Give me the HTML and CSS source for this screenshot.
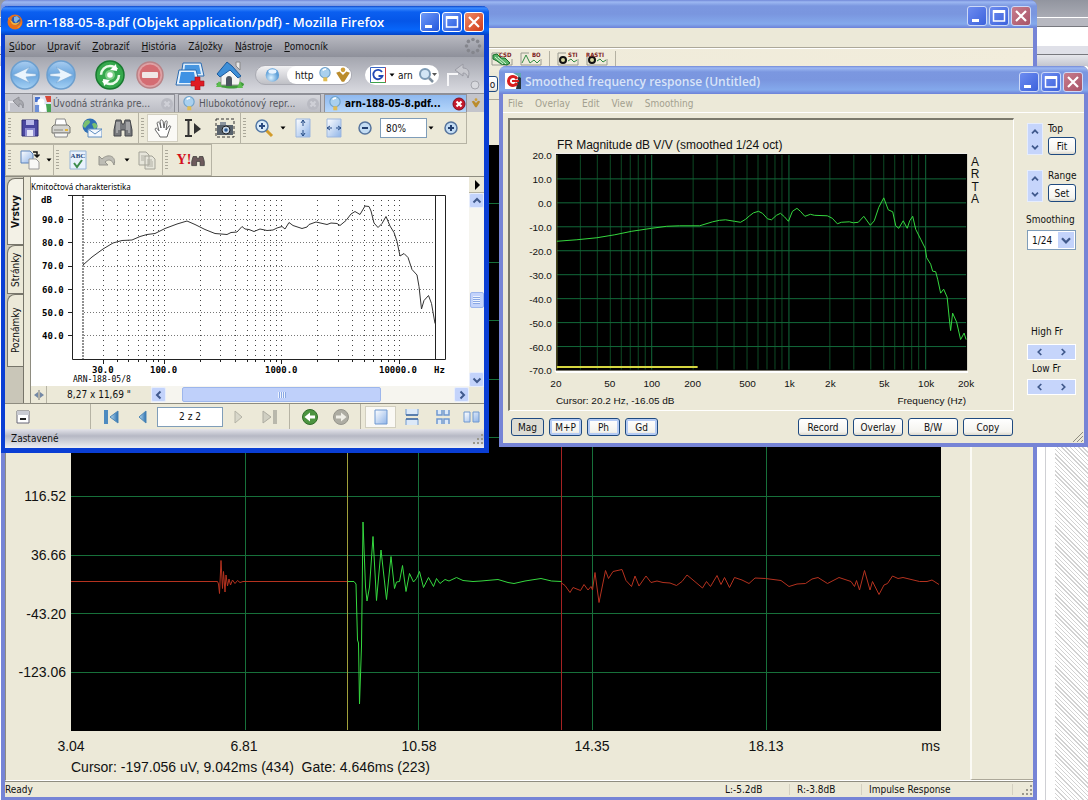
FILE: index.html
```html
<!DOCTYPE html>
<html lang="sk">
<head>
  <meta charset="UTF-8">
  <title>arn-188-05-8.pdf</title>
  <link rel="stylesheet" href="styles.css">
</head>
<body>
  <!-- Shared icon shapes -->
  <svg class="defs" aria-hidden="true">
    <defs>
      <linearGradient id="gBlue" x1="0" y1="0" x2="0" y2="1"><stop offset="0" stop-color="#a9cdf0"/><stop offset=".5" stop-color="#6ba6de"/><stop offset="1" stop-color="#a6d2f5"/></linearGradient>
      <linearGradient id="gPage" x1="0" y1="0" x2="1" y2="1"><stop offset="0" stop-color="#fff"/><stop offset="1" stop-color="#8fb4e8"/></linearGradient>
      <linearGradient id="gArrow" x1="0" y1="0" x2="1" y2="0"><stop offset="0" stop-color="#bfe0f5"/><stop offset="1" stop-color="#2a6fae"/></linearGradient>
      <radialGradient id="gBall" cx=".4" cy=".7"><stop offset="0" stop-color="#dff3ff"/><stop offset="1" stop-color="#5fa0d8"/></radialGradient>
    </defs>
    <symbol id="min" viewBox="0 0 20 20"><path d="M5 13h7v3H5z" fill="#fff"/></symbol>
    <symbol id="max" viewBox="0 0 20 20"><path d="M4.500 5h11v10h-11z" fill="none" stroke="#fff" stroke-width="1.500"/><path d="M4 4h12v3H4z" fill="#fff"/></symbol>
    <symbol id="close" viewBox="0 0 20 20"><path d="M5 5l10 10m0-10L5 15" stroke="#fff" stroke-width="2.200"/></symbol>
    <symbol id="chevU" viewBox="0 0 14 14"><path d="M3.500 8.500L7 5l3.500 3.500" fill="none" stroke="#40598c" stroke-width="2"/></symbol>
    <symbol id="chevD" viewBox="0 0 14 14"><path d="M3.500 5.500L7 9l3.500-3.500" fill="none" stroke="#40598c" stroke-width="2"/></symbol>
    <symbol id="chevL" viewBox="0 0 14 14"><path d="M8.500 3.500L5 7l3.500 3.500" fill="none" stroke="#40598c" stroke-width="2"/></symbol>
    <symbol id="chevR" viewBox="0 0 14 14"><path d="M5.500 3.500L9 7l-3.500 3.500" fill="none" stroke="#40598c" stroke-width="2"/></symbol>
    <symbol id="drop" viewBox="0 0 8 8"><path d="M1.500 2.500h5L4 5.500z" fill="#000"/></symbol>
    <symbol id="bulb" viewBox="0 0 14 14"><circle cx="7" cy="5" r="4.500" fill="#a9d0ee" stroke="#6ea2cc"/><path d="M5 3a3 3 0 0 1 3-1" stroke="#fff" stroke-width="1.500" fill="none"/><path d="M5.500 9h3.500v3.500H5.500z" fill="#e0bd55"/></symbol>
    <symbol id="check" viewBox="0 0 14 14"><path d="M1 5l3-1 3 3 3-3 3 1-5 8H6z" fill="#bb8c2c"/><circle cx="7" cy="2.500" r="2" fill="#cf9f3a"/></symbol>
    <symbol id="grip" viewBox="0 0 12 12"><path d="M9 1h2v2H9zM9 5h2v2H9zM5 5h2v2H5zM9 9h2v2H9zM5 9h2v2H5zM1 9h2v2H1z" fill="#9a988d"/></symbol>
  </svg>

  <main class="desktop">
    <div class="backdrop">
      <div class="back-bar"></div>
      <div class="back-strip"></div>
      <div class="back-white"></div>
      <div class="back-strip light"></div>
      <div class="back-page"></div>
    </div>

    <!-- Impulse response window -->
    <section class="window main-win" aria-label="Impulse Response">
      <header class="titlebar">
        <span class="title"></span>
        <div class="controls">
          <button aria-label="Minimize"><svg><use href="#min"/></svg></button>
          <button aria-label="Maximize"><svg><use href="#max"/></svg></button>
          <button class="close" aria-label="Close"><svg><use href="#close"/></svg></button>
        </div>
      </header>
      <div class="main-menu"></div>
      <div class="main-tools">
        <button aria-label="CSD"><svg viewBox="0 0 22 16"><path d="M1 2v12h20V8M1 2h8" fill="none" stroke="#999a90"/><path d="M2 4l4-1 4 4 4 0 5 5-3 2-6-1-4-3-4-2z" fill="#5bb56a" stroke="#136b26"/><path d="M4 6l8 7M7 6l8 7" stroke="#d9f2d9"/><text x="8" y="6">CSD</text></svg></button>
        <button aria-label="BO"><svg viewBox="0 0 22 16"><path d="M1 2v12h20V8M1 2h8" fill="none" stroke="#999a90"/><path d="M2 12L6 4l4 8 4-3 3 3 3-3" fill="none" stroke="#328a43"/><text x="12" y="6">BO</text></svg></button>
        <i class="sep"></i>
        <button aria-label="STI"><svg viewBox="0 0 22 16"><path d="M1 2v12h20V8M1 2h8" fill="none" stroke="#999a90"/><circle cx="6" cy="9" r="3" fill="#d7d7a0" stroke="#111" stroke-width="2"/><path d="M11 10l3-2 3 3 3-2" fill="none" stroke="#328a43"/><text x="11" y="6">STI</text></svg></button>
        <button aria-label="RASTI"><svg viewBox="0 0 22 16"><path d="M1 6v8h20V8" fill="none" stroke="#999a90"/><circle cx="6" cy="9" r="3" fill="#d7d7a0" stroke="#111" stroke-width="2"/><path d="M11 10l3-2 3 3 3-2" fill="none" stroke="#328a43"/><text x="0" y="6">RASTI</text></svg></button>
        <i class="sep"></i>
      </div>
      <div class="main-tools second"><button class="btn">o</button></div>
      <div class="main-body">
        <svg class="impulse" viewBox="6 100 964 679" role="img" aria-label="Impulse response plot">
          <rect x="71" y="145" width="870" height="586"/>
          <path class="grid-line" d="M245.500 145v585M418.500 145v585M592.500 145v585M766.500 145v585M71 203.500h869M71 262.500h869M71 320.500h869M71 379.500h869M71 437.500h869M71 496.500h869M71 555.500h869M71 613.500h869M71 672.500h869"/>
          <path d="M347.500 145v585" stroke="#a0a03a" fill="none"/>
          <path d="M561.500 145v585" stroke="#a52222" fill="none"/>
          <polyline class="red" points="71,581.5 217.500,581.5 218.500,584 219.500,593.5 221,560.5 222.500,588.500 223.500,571.5 225,592 226,575 227.500,586 229,579 230.500,585 232.500,580 235,583.5 237.500,580.5 240,582.5 243,581.5 347,581.5"/>
          <polyline class="green" points="348,581.5 354,581.5 356,584 357.500,640 358.500,643 359.500,704 361.500,646 363,522 365.500,587 367,601 369.500,587 373,536.500 376.500,600.500 381,550 386.500,599.500 391,556.500 394.500,588.500 396.500,582 399.500,581.5 402.500,565.500 406,591.500 409.500,573.5 413.500,582 416.500,578.500 419.500,571.5 423.500,587.500 428.500,577.5 433.500,586.5 436.500,578.5 440,583.5 445,579.5 449,581 456.500,577.5 463,580.500 473,581.5 481,581 498,579.5 508,582.5 514,583.5 525,581 541,578.5 551.500,581 561.500,581.5"/>
          <polyline class="red" points="561.500,583 565,585.5 570,592.5 573,587.5 580.500,590.5 584,584.5 588,590 591,586.5 592.500,590 595,572.5 599,602.5 605.500,570.5 608.500,578.5 613,571.5 622,569.5 626,580.5 631.500,586.5 635,576 639,586 646,576 651,582.5 657,581 663,582.5 670,583 676.500,585.5 682,581.5 687,575 693,580 702.500,588 706.500,581.5 710.500,586.5 717,575.5 721,584.5 724.500,577.5 729.500,587.5 734.500,577.5 742,580 749,583.5 755,578 765.500,578.5 781,580.5 789,586.5 797,584 805.500,583.5 812,579 818,577.5 827.500,583.5 839,577.5 851,581.5 854.500,586.5 856.500,580.5 859.500,590 864.500,570.5 870,590 872.500,581.5 879,594.5 884,585 887.500,583.5 892.500,576 898,578.5 903,577.5 919.500,581.5 927,581.5 932,580 939,584.5"/>
          <g class="axis-y"><text x="66" y="501">116.52</text><text x="66" y="560">36.66</text><text x="66" y="619">-43.20</text><text x="66" y="677">-123.06</text><text x="940" y="751">ms</text></g>
          <g class="axis-x"><text x="71" y="751">3.04</text><text x="244" y="751">6.81</text><text x="419" y="751">10.58</text><text x="592" y="751">14.35</text><text x="766" y="751">18.13</text></g>
          <text x="71" y="772" xml:space="preserve">Cursor: -197.056 uV, 9.042ms (434)  Gate: 4.646ms (223)</text>
        </svg>
        <div class="main-side"></div>
      </div>
      <footer class="main-status">
        <span class="grow">Ready</span><span class="cell">L:-5.2dB</span><span class="cell">R:-3.8dB</span><span class="cell wide">Impulse Response</span>
        <svg class="size-grip"><use href="#grip"/></svg>
      </footer>
    </section>

    <!-- Smoothed frequency response window -->
    <section class="window fr-win" aria-label="Smoothed frequency response">
      <header class="titlebar">
        <svg class="app-icon" viewBox="0 0 16 16"><path d="M0 0h16v16H0z" fill="#fff"/><path d="M14 0h2v16h-5z" fill="#26343a"/><path d="M8 0h8v5z" fill="#5fa9b0"/><path d="M12 6a4.500 4.500 0 1 0 0 4" fill="none" stroke="#d81e1e" stroke-width="3"/><path d="M7 8h7" stroke="#d81e1e" stroke-width="2"/></svg>
        <span class="title">Smoothed frequency response (Untitled)</span>
        <div class="controls">
          <button aria-label="Minimize"><svg><use href="#min"/></svg></button>
          <button aria-label="Maximize"><svg><use href="#max"/></svg></button>
          <button class="close" aria-label="Close"><svg><use href="#close"/></svg></button>
        </div>
      </header>
      <nav class="fr-menu">
        <button>File</button><button>Overlay</button><button>Edit</button><button>View</button><button>Smoothing</button>
      </nav>
      <div class="fr-body">
        <div class="fr-left">
          <svg class="fr-chart" viewBox="510 119 504 291" role="img" aria-label="Frequency response magnitude">
            <path d="M555.500 371.500V152.500H968" stroke="#fff" fill="none"/>
            <path d="M556 371.500h413" stroke="#fff" stroke-width="2"/>
            <rect x="556" y="153" width="412" height="217"/>
            <path class="minor" d="M580.500 154v215M597.500 154v215M610.500 154v215M621.500 154v215M630.500 154v215M638.500 154v215M645.500 154v215M693.500 154v215M717.500 154v215M734.500 154v215M747.500 154v215M758.500 154v215M767.500 154v215M775.500 154v215M782.500 154v215M830.500 154v215M854.500 154v215M871.500 154v215M884.500 154v215M895.500 154v215M904.500 154v215M912.500 154v215M919.500 154v215"/>
            <path class="major" d="M652 154v215M789.500 154v215M926.500 154v215M557 178h410M557 202h410M557 226h410M557 250h410M557 274h410M557 298h410M557 322h410M557 346h410"/>
            <path d="M557 154v215" stroke="#70702c"/>
            <path d="M557 366.500h141" stroke="#d6d640" stroke-width="2"/>
            <polyline class="green" points="557,240.500 577,239 597,237 615,234 632,230.500 652,227.500 667,225.500 680,225 700,225 713,221 720,219.500 726,219 735,220.500 741,221.500 746,218.500 750,215 754,212 759,210.500 763,212.500 768,218 772,219 777,214.500 781,212.500 785,216 789,220.500 793,210.500 797.500,207.500 801,210.500 805.500,215.500 811,213.500 815,214.500 828,215 833,217.500 838,223 842,221.500 850,221 854,222 859,221.500 864.500,215.500 871,224.500 875,220 879.500,206.500 884.500,197 889,209 893.500,211 896.500,225 899.500,227.500 904,220 908,227.500 910.500,220 913.500,215.500 916.500,228.500 921.500,238.500 926,247.500 927.500,257 931.500,263.500 933.500,270.500 936.500,271 938.500,278.500 941.500,292.500 944.500,288.500 948,296.500 950,316.500 951.500,330 953.500,312.500 957.500,321.500 961.500,339 965,332.500 967,339"/>
            <text class="head" x="557" y="148">FR Magnitude dB V/V (smoothed 1/24 oct)</text>
            <g class="axis-y"><text x="552" y="158">20.0</text><text x="552" y="182">10.0</text><text x="552" y="206">0.0</text><text x="552" y="230">-10.0</text><text x="552" y="254">-20.0</text><text x="552" y="278">-30.0</text><text x="552" y="302">-40.0</text><text x="552" y="326">-50.0</text><text x="552" y="350">-60.0</text><text x="552" y="374">-70.0</text><text x="967" y="404">Frequency (Hz)</text></g>
            <g class="axis-x"><text x="556" y="387">20</text><text x="610" y="387">50</text><text x="652" y="387">100</text><text x="693" y="387">200</text><text x="748" y="387">500</text><text x="790" y="387">1k</text><text x="831" y="387">2k</text><text x="885" y="387">5k</text><text x="927" y="387">10k</text><text x="967" y="387">20k</text></g>
            <g class="axis-x head"><text x="976" y="165">A</text><text x="976" y="177">R</text><text x="976" y="190">T</text><text x="976" y="202">A</text></g>
            <text x="556" y="404">Cursor: 20.2 Hz, -16.05 dB</text>
          </svg>
          <div class="fr-buttons">
            <button class="btn pressed">Mag</button><button class="btn lit">M+P</button><button class="btn lit">Ph</button><button class="btn lit">Gd</button>
            <span class="grow"></span>
            <button class="btn long">Record</button><button class="btn long">Overlay</button><button class="btn long">B/W</button><button class="btn long">Copy</button>
          </div>
        </div>
        <div class="fr-side">
          <div class="pair">
            <div class="spin"><button aria-label="Top up"><svg><use href="#chevU"/></svg></button><button aria-label="Top down"><svg><use href="#chevD"/></svg></button></div>
            <div class="stack"><span>Top</span><button class="btn">Fit</button></div>
          </div>
          <div class="pair">
            <div class="spin"><button aria-label="Range up"><svg><use href="#chevU"/></svg></button><button aria-label="Range down"><svg><use href="#chevD"/></svg></button></div>
            <div class="stack"><span>Range</span><button class="btn">Set</button></div>
          </div>
          <label for="smooth">Smoothing</label>
          <div class="combo"><select id="smooth"><option>1/24</option></select><svg><use href="#chevD"/></svg></div>
          <span class="hf">High Fr</span>
          <div class="hspin"><button aria-label="High Fr down"><svg><use href="#chevL"/></svg></button><button aria-label="High Fr up"><svg><use href="#chevR"/></svg></button></div>
          <span class="hf low">Low Fr</span>
          <div class="hspin"><button aria-label="Low Fr down"><svg><use href="#chevL"/></svg></button><button aria-label="Low Fr up"><svg><use href="#chevR"/></svg></button></div>
        </div>
      </div>
      <svg class="corner" viewBox="0 0 12 12"><path d="M1 11L11 1M5 11l6-6M9 11l2-2" stroke="#8e8c80"/></svg>
    </section>

    <!-- Firefox window with the PDF plugin -->
    <section class="window ff-win" aria-label="Mozilla Firefox">
      <header class="titlebar">
        <svg class="app-icon" viewBox="0 0 16 16"><circle cx="8" cy="8" r="7.500" fill="#e8701a"/><circle cx="9" cy="6.500" r="4.500" fill="#2b56a8"/><path d="M7 3l3-1 3 3-2 1-2 3-2-2z" fill="#7db3e6"/><path d="M1 3c0 3 2 3 4 4 1 3 5 3 8 0-1 4-5 5-8 3z" fill="#f7b23b"/><path d="M13 3c3 4 1 9-3 11 4-1 6-7 3-11z" fill="#ffe26a"/></svg>
        <span class="title">arn-188-05-8.pdf (Objekt application/pdf) - Mozilla Firefox</span>
        <div class="controls">
          <button aria-label="Minimize"><svg><use href="#min"/></svg></button>
          <button aria-label="Maximize"><svg><use href="#max"/></svg></button>
          <button class="close" aria-label="Close"><svg><use href="#close"/></svg></button>
        </div>
      </header>
      <nav class="ff-menu">
        <button><u>S</u>úbor</button><button><u>U</u>praviť</button><button><u>Z</u>obraziť</button><button><u>H</u>istória</button><button>Zá<u>l</u>ožky</button><button><u>N</u>ástroje</button><button><u>P</u>omocník</button>
        <svg class="throbber" viewBox="0 0 18 18"><g fill="#85868d"><circle cx="9" cy="2.500" r="1.800"/><circle cx="13.600" cy="4.400" r="1.800"/><circle cx="15.500" cy="9" r="1.800"/><circle cx="13.600" cy="13.600" r="1.800"/><circle cx="9" cy="15.500" r="1.800"/><circle cx="4.400" cy="13.600" r="1.800"/><circle cx="2.500" cy="9" r="1.800"/><circle cx="4.400" cy="4.400" r="1.800"/></g></svg>
      </nav>
      <div class="ff-nav">
        <div class="nav-pair">
          <button aria-label="Back"><svg viewBox="0 0 30 30"><circle cx="15" cy="15" r="14" fill="url(#gBlue)" stroke="#6d9fce" stroke-width="1.500"/><path d="M3 15L20 7q-3 3-4 6l10 1v2l-10 1q1 3 4 6z" fill="#eaf4fd" stroke="#7aa8d2" stroke-width=".6"/></svg></button>
          <button aria-label="Forward"><svg viewBox="0 0 30 30"><circle cx="15" cy="15" r="14" fill="url(#gBlue)" stroke="#6d9fce" stroke-width="1.500"/><path d="M27 15L10 7q3 3 4 6L4 14v2l10 1q-1 3-4 6z" fill="#eaf4fd" stroke="#7aa8d2" stroke-width=".6"/></svg></button>
        </div>
        <button aria-label="Reload"><svg viewBox="0 0 30 30"><circle cx="15" cy="15" r="14" fill="#35a84c" stroke="#187a30" stroke-width="1.500"/><circle cx="15" cy="15" r="9" fill="none" stroke="#eafbe9" stroke-width="2.500" stroke-dasharray="22 6.300"/><path d="M21 4l1 7-7-1zM9 26l-1-7 7 1z" fill="#fff"/><circle cx="15" cy="15" r="5" fill="#7dce86"/><circle cx="15" cy="15" r="2.800" fill="#fff"/></svg></button>
        <button aria-label="Stop"><svg viewBox="0 0 30 30"><circle cx="15" cy="15" r="13" fill="#dfa0a4" stroke="#b98286" stroke-width="1.500"/><circle cx="15" cy="15" r="10.500" fill="#d46c72"/><rect x="7" y="12" width="16" height="6" rx="1" fill="#f0e6e6"/></svg></button>
        <button aria-label="New tab"><svg viewBox="0 0 30 30"><path d="M8 3h18l3 13H6z" fill="#dcecfa" stroke="#2a6ab0"/><path d="M10 5h14l2 9H9z" fill="#4796e0"/><path d="M4 10h17l4 15H1z" fill="#e7f3fd" stroke="#2a6ab0"/><path d="M6 12h13l2 11H4z" fill="#3f92e4"/><path d="M20 17h5v4h4v5h-4v4h-5v-4h-4v-5h4z" fill="#e01b24" stroke="#9d1018" stroke-width=".6"/></svg></button>
        <button aria-label="Home"><svg viewBox="0 0 30 30"><path d="M1 24c5-4 22-5 28 0 0 6-24 6-28 0z" fill="#3f9a3a"/><path d="M6 13l10-7 9 9v10H6z" fill="#f4f4f2" stroke="#9a9a98"/><path d="M2 14L12 2l5 4 9 10-3 2-8-8-10 7z" fill="#3e8fd8" stroke="#1d5a9c"/><path d="M21 2h4v8l-4-4z" fill="#e9e9e9" stroke="#888"/><path d="M11 26v-7c0-4 6-4 6 0v7z" fill="#4c5560"/><path d="M1 27l3-6 3 6zM22 28l3-7 3 7z" fill="#5cbd4f"/></svg></button>
        <div class="url">
          <svg class="site" viewBox="0 0 30 20"><circle cx="16" cy="10" r="7.500" fill="url(#gBall)"/><ellipse cx="16" cy="6" rx="4.500" ry="2.500" fill="#e8f4ff"/></svg>
          <div class="url-in"><input type="text" value="http" aria-label="Address"><svg class="s14"><use href="#bulb"/></svg><svg class="s14"><use href="#check"/></svg></div>
        </div>
        <div class="search">
          <svg class="g" viewBox="0 0 16 16"><path d="M.5.500h15v15H.500z" fill="#fff" stroke="#3b66c4"/><path d="M15.500.500v15" stroke="#d23a3a"/><path d="M.500 15.500h15" stroke="#3fa24b"/><path d="M12 5a4.700 4.700 0 1 0 .500 4H8.500" fill="none" stroke="#2148b5" stroke-width="1.800"/></svg>
          <svg class="s8"><use href="#drop"/></svg>
          <input type="text" value="arn" aria-label="Search">
          <svg class="mag" viewBox="0 0 20 16"><circle cx="7" cy="7" r="5" fill="#d3e6f5" stroke="#7d9bb5" stroke-width="2"/><path d="M11 11l4 4" stroke="#7d8f9f" stroke-width="2.500"/><path d="M14 6h5l-2.500 3z" fill="#555"/></svg>
        </div>
        <svg class="nav-undo" viewBox="0 0 36 30"><path d="M3 26V14h10" fill="none" stroke="#f7f7f9" stroke-width="2"/><path d="M10 10l8-6v4c6 0 7 5 5 10-1-4-3-5-5-5v3z" fill="#c7c8ce" stroke="#9b9ca5"/><circle cx="30" cy="25" r="4" fill="#d8d9de" stroke="#a5a6ad"/></svg>
      </div>
      <div class="ff-tabs">
        <button class="tab-nav" aria-label="Reopen tab"><svg viewBox="0 0 22 18"><path d="M3 17V8h6" fill="none" stroke="#e7e7ec" stroke-width="2"/><path d="M7 7l6-4v3c4 0 5 4 4 8-1-4-2-4-4-4v3z" fill="#a9aab0" stroke="#8f9097"/></svg></button>
        <button class="tab"><svg viewBox="0 0 16 16"><path d="M0 0h16v16H0z" fill="#dfe4f2"/><path d="M0 1h5v5H0z" fill="#4772cf"/><circle cx="6" cy="6" r="3.500" fill="#fff"/><circle cx="8" cy="12" r="4" fill="#fff"/><path d="M10 0h6v6h-4z" fill="#d84a3a"/><path d="M11 8h5v8h-4z" fill="#47a450"/><path d="M0 9h4v7H0z" fill="#6d8fd8"/></svg><span>Úvodná stránka pre...</span><svg class="x" viewBox="0 0 14 14"><circle cx="7" cy="7" r="6" fill="#b9bac2"/><path d="M4.500 4.500l5 5m0-5l-5 5" stroke="#cfd0d7" stroke-width="2.200"/></svg></button>
        <button class="tab"><svg><use href="#bulb"/></svg><span>Hlubokotónový repr...</span><svg class="x" viewBox="0 0 14 14"><circle cx="7" cy="7" r="6" fill="#b9bac2"/><path d="M4.500 4.500l5 5m0-5l-5 5" stroke="#cfd0d7" stroke-width="2.200"/></svg></button>
        <button class="tab active"><svg><use href="#bulb"/></svg><span>arn-188-05-8.pdf...</span><svg class="x" viewBox="0 0 14 14"><circle cx="7" cy="7" r="6" fill="#c3182b" stroke="#7d1020"/><path d="M4.500 4.500l5 5m0-5l-5 5" stroke="#fff" stroke-width="2.200"/></svg></button>
        <button class="tab-end" aria-label="Check"><svg class="s10"><use href="#check"/></svg></button>
      </div>

      <div class="pdf-tools">
        <div class="group">
          <button aria-label="Save"><svg viewBox="0 0 20 20"><path d="M2 2h16v16H2z" fill="#4a47a0" stroke="#2d2b70"/><path d="M6 2h8v5H6z" fill="#b8b8ea"/><path d="M5 10h10v8H5z" fill="#8d8bd2"/><path d="M7 12h6v6H7z" fill="#e5e5f8"/></svg></button>
          <button aria-label="Print"><svg viewBox="0 0 20 20"><path d="M5 1h9l2 7H4z" fill="#fff" stroke="#888"/><path d="M1 9l2-2h14l2 2v6H1z" fill="#d4d4d0" stroke="#77776f"/><path d="M3 15h14l-1 4H4z" fill="#f6f6f2" stroke="#888"/><path d="M3 12h9" stroke="#8a8a80"/><path d="M14 11h3v2h-3z" fill="#e3b43c"/></svg></button>
          <button aria-label="E-mail"><svg viewBox="0 0 20 20"><circle cx="8" cy="8" r="7.500" fill="#2f6fb4"/><path d="M3 3c3-2 5-1 5 1s-3 3-4 5-3 0-3-2zM10 6c2-2 4-1 5 1s-2 5-3 4z" fill="#7ac06f"/><path d="M6 11h14v8H6z" fill="#f4f8fd" stroke="#5f8dc0"/><path d="M6 11l7 5 7-5" fill="none" stroke="#5f8dc0"/></svg></button>
          <button aria-label="Find"><svg viewBox="0 0 20 20"><path d="M3 2h5l1 4h2l1-4h5l2 10v6h-7v-6H8v6H1v-6z" fill="#77797c" stroke="#44464a"/><path d="M4 4v11M6 4v8M14 4v8M16 4v11" stroke="#cfcfcf"/></svg></button>
        </div>
        <div class="group">
          <button class="sel" aria-label="Hand"><svg viewBox="0 0 20 20"><path d="M7 19c-1-3-4-5-5-8 1-2 3 0 4 2L4 5c1-2 2-1 3 1l1 4-1-7c1-2 2-1 3 0l1 7 1-6c1-2 3-1 2 1l-1 7 3-4c2-1 2 1 1 2l-2 6-1 3z" fill="#fff" stroke="#555" stroke-width=".9"/></svg></button>
          <button aria-label="Select"><svg viewBox="0 0 20 20"><path d="M1 2h7M1 18h7M4.500 2v16" stroke="#333" stroke-width="2"/><path d="M10 5v11l7-5z" fill="#333"/></svg></button>
          <button aria-label="Snapshot"><svg viewBox="0 0 20 20"><path d="M1 1h18v18H1z" fill="none" stroke="#333" stroke-dasharray="3 2"/><path d="M2 7h16v10H2z" fill="#58626d"/><path d="M5 4h6v3H5z" fill="#8b949e"/><circle cx="11" cy="12" r="4" fill="#c9d8e8" stroke="#222"/><circle cx="11" cy="12" r="1.800" fill="#2d5a92"/></svg></button>
        </div>
        <div class="group last">
          <button class="tight" aria-label="Zoom in"><svg viewBox="0 0 20 20"><path d="M12 12l6 6" stroke="#d29b2b" stroke-width="3"/><circle cx="8" cy="8" r="6" fill="#d9ebf9" stroke="#5277a5" stroke-width="1.500"/><path d="M5 8h6M8 5v6" stroke="#2a4a80" stroke-width="2"/></svg></button><svg class="s8"><use href="#drop"/></svg>
          <button aria-label="Fit page"><svg viewBox="0 0 20 20"><path d="M3 1h14v18H3z" fill="url(#gPage)" stroke="#9db7de"/><path d="M10 2v6M8 5l2-3 2 3M10 18v-6M8 15l2 3 2-3" fill="none" stroke="#274d86"/></svg></button>
          <button aria-label="Fit width"><svg viewBox="0 0 20 20"><path d="M3 1h14v18H3z" fill="url(#gPage)" stroke="#9db7de"/><path d="M3 10h5M6 8l-3 2 3 2M17 10h-5M14 8l3 2-3 2" fill="none" stroke="#274d86"/></svg></button>
          <button aria-label="Zoom out"><svg viewBox="0 0 20 20"><circle cx="10" cy="10" r="6" fill="#c3dcf3" stroke="#56749d" stroke-width="1.500"/><path d="M7 10h6" stroke="#223f70" stroke-width="2"/></svg></button>
          <input class="zoom" type="text" value="80%" aria-label="Zoom"><svg class="s8"><use href="#drop"/></svg>
          <button aria-label="Zoom in step"><svg viewBox="0 0 20 20"><circle cx="10" cy="10" r="6" fill="#c3dcf3" stroke="#56749d" stroke-width="1.500"/><path d="M7 10h6M10 7v6" stroke="#223f70" stroke-width="2"/></svg></button>
        </div>
      </div>
      <div class="pdf-tools">
        <div class="group">
          <button aria-label="Export"><svg viewBox="0 0 20 20"><path d="M1 1h9l3 3v9H1z" fill="url(#gPage)" stroke="#5d83bb"/><path d="M9 9h7l3 3v7H9z" fill="#f8f8f6" stroke="#999"/><path d="M13 2h4v4M14.500 4.500L17 7l2.500-2.500" fill="none" stroke="#111" stroke-width="1.500"/></svg></button><svg class="s8"><use href="#drop"/></svg>
        </div>
        <div class="group">
          <button aria-label="Spell check"><svg viewBox="0 0 20 20"><path d="M2 1h16v18H2z" fill="#e9f2fc" stroke="#96b4d8"/><text x="10" y="8" text-anchor="middle" class="abc">ABC</text><path d="M6 13l3 4 5-7" fill="none" stroke="#3d8d4c" stroke-width="2"/></svg></button>
          <button class="tight" aria-label="Undo"><svg viewBox="0 0 20 20"><path d="M1 6v9h9l-3-3c3-3 7-3 9 3 3-9-6-12-12-6z" fill="#bdbcb4" stroke="#95948c"/></svg></button><svg class="s8"><use href="#drop"/></svg>
          <button aria-label="Copy"><svg viewBox="0 0 20 20"><path d="M2 2h7l3 3v10H2zM8 6h7l3 3v10H8z" fill="#e6e5da" stroke="#a3a297"/><path d="M10 10h5M10 12h6M10 14h6M10 16h6M4 6h4M4 8h3M4 10h3" stroke="#b0afa4"/></svg></button>
        </div>
        <div class="group last">
          <button class="yahoo" aria-label="Yahoo search"><b>Y!</b><svg viewBox="0 0 20 20"><path d="M3 5h5l1 3h2l1-3h5l2 7v6h-6v-6H8v6H1v-6z" fill="#6d5a5c" stroke="#333"/></svg></button>
        </div>
      </div>

      <div class="pdf-view">
        <div class="side-tabs"><button class="on">Vrstvy</button><button>Stránky</button><button class="tall">Poznámky</button></div>
        <div class="splitter"></div>
        <div class="doc">
          <div class="doc-main">
            <svg class="doc-page" viewBox="31 177 438 209" role="img" aria-label="Kmitočtová charakteristika">
              <text class="caption" x="31" y="190">Kmitočtová charakteristika</text>
              <path class="dots" d="M84 219.500h352M84 242.500h352M84 266.500h352M84 289.500h352M84 312.500h352M84 335.500h352"/>
              <path class="dots v" d="M103.500 200v158M117.500 200v158M128.500 200v158M138.500 200v158M146.500 200v158M153.500 200v158M158.500 200v158M164.500 200v158M200.500 200v158M220.500 200v158M235.500 200v158M247.500 200v158M255.500 200v158M264.500 200v158M270.500 200v158M276.500 200v158M281.500 200v158M317.500 200v158M338.500 200v158M352.500 200v158M364.500 200v158M373.500 200v158M381.500 200v158M388.500 200v158M394.500 200v158M399.500 200v158"/>
              <path class="frame" d="M72.500 195.500h373v164h-373zM435.500 195.500v164M68 195.500h5M68 219.500h5M68 242.500h5M68 266.500h5M68 289.500h5M68 312.500h5M68 335.500h5M103.500 359v5M117.500 359v3M128.500 359v3M138.500 359v3M146.500 359v3M153.500 359v3M158.500 359v3M164.500 359v5M200.500 359v3M220.500 359v3M235.500 359v3M247.500 359v3M255.500 359v3M264.500 359v3M270.500 359v3M276.500 359v3M281.500 359v5M317.500 359v3M338.500 359v3M352.500 359v3M364.500 359v3M373.500 359v3M381.500 359v3M388.500 359v3M394.500 359v3M399.500 359v5"/>
              <path class="frame" d="M83 196v163" stroke-dasharray="2 1"/>
              <polyline points="83,265 92,257 103,249 113,243 122,240.500 132,240 140,236.500 147,234.500 155,233.500 165,228.500 177,224 187,221 195,224.500 205,229.500 215,233.500 227,234.500 231,232.500 237,232 242,226.500 245,229 249,229.500 254,231.500 260,229 267,230.500 273,230 277,228 282,226.500 285,229 289,222.500 293,225.500 302,228.500 307,227 309,224.500 316,222 327,224.500 331,223 337,223.500 340,225.500 346,220.500 351,214 355,211.500 360,214.500 365,206 369,206.500 371,211 374,223 378,227.500 382,223.500 386,216.500 390,226 394,232.500 397,241.500 400,256 404,253.500 408,257.500 412,269.500 417,275 419,286.500 421.500,309 424,300.500 428.500,295.500 431.500,303.500 435,323.500"/>
              <g class="tick"><text x="41" y="203">dB</text><text x="42" y="223">90.0</text><text x="42" y="246">80.0</text><text x="42" y="269">70.0</text><text x="42" y="293">60.0</text><text x="42" y="316">50.0</text><text x="42" y="339">40.0</text><text x="92" y="373">30.0</text><text x="150" y="373">100.0</text><text x="265" y="373">1000.0</text><text x="379" y="373">10000.0</text><text x="434" y="373">Hz</text></g>
              <text class="part" x="73" y="382">ARN-188-05/8</text>
            </svg>
            <div class="hbar">
              <button class="expand" aria-label="Expand"><svg viewBox="0 0 14 14"><path d="M7 2v10" stroke="#777"/><path d="M6 4v6L2 7zM8 4v6l4-3z" fill="#7488a5"/></svg></button>
              <span class="size">8,27 x 11,69 "</span>
              <button class="sb" aria-label="Scroll left"><svg><use href="#chevL"/></svg></button>
              <div class="track"><div class="thumb"></div></div>
              <button class="sb" aria-label="Scroll right"><svg><use href="#chevR"/></svg></button>
            </div>
          </div>
          <div class="vbar">
            <button class="flat" aria-label="Menu"><svg viewBox="0 0 14 14"><path d="M5 2v10l5-5z"/></svg></button>
            <button class="sb" aria-label="Scroll up"><svg><use href="#chevU"/></svg></button>
            <div class="track"><div class="thumb"></div></div>
            <button class="sb" aria-label="Scroll down"><svg><use href="#chevD"/></svg></button>
            <div class="nook"></div>
          </div>
        </div>
      </div>

      <div class="pdf-nav">
        <div class="cell hide"><button aria-label="Hide"><svg viewBox="0 0 20 20"><path d="M4 4h12v12H4z" fill="#fff" stroke="#667"/><path d="M4 4h12v4H4z" fill="#c9cbd2"/><path d="M7 12h6" stroke="#222" stroke-width="2"/></svg></button></div>
        <div class="cell pages">
          <button aria-label="First page"><svg viewBox="0 0 20 20"><path d="M3 3h4v14H3z" fill="#4e8bc0"/><path d="M17 4v12L9 10z" fill="url(#gArrow)" stroke="#4d86b5"/></svg></button>
          <button aria-label="Previous page"><svg viewBox="0 0 20 20"><path d="M14 4v12L7 10z" fill="url(#gArrow)" stroke="#4d86b5"/></svg></button>
          <input class="page" type="text" value="2 z 2" aria-label="Page">
          <button aria-label="Next page"><svg viewBox="0 0 20 20"><path d="M6 4v12l7-6z" fill="#d8d7ca" stroke="#b4b3a6"/></svg></button>
          <button aria-label="Last page"><svg viewBox="0 0 20 20"><path d="M3 4v12l8-6z" fill="#d0cfc2" stroke="#acaba0"/><path d="M13 3h4v14h-4z" fill="#b9b8ac"/></svg></button>
        </div>
        <div class="cell">
          <button aria-label="Previous view"><svg viewBox="0 0 20 20"><circle cx="10" cy="10" r="7.500" fill="#4c9440" stroke="#2f6b28"/><path d="M4.500 10L10 5.500v3h5v3h-5v3z" fill="#fff"/></svg></button>
          <button aria-label="Next view"><svg viewBox="0 0 20 20"><circle cx="10" cy="10" r="7.500" fill="#adaca2" stroke="#95948b"/><path d="M15.500 10L10 5.500v3H5v3h5v3z" fill="#efeee6"/></svg></button>
        </div>
        <div class="cell">
          <button class="sel" aria-label="Single page"><svg viewBox="0 0 20 20"><path d="M4 3h12v14H4z" fill="url(#gPage)" stroke="#6f98d0"/></svg></button>
          <button aria-label="Continuous"><svg viewBox="0 0 20 20"><path d="M4 2v6h12V2M4 18v-6h12v6" fill="#dce9f8" stroke="#6f98d0"/><path d="M4 8h12M4 12h12" stroke="#42699f" stroke-width="1.500"/></svg></button>
          <button aria-label="Continuous facing"><svg viewBox="0 0 20 20"><path d="M4 3v5h5V3M11 3v5h5V3M4 17v-5h5v5M11 17v-5h5v5" fill="#dce9f8" stroke="#6f98d0" stroke-width="1.500"/></svg></button>
          <button class="end" aria-label="Facing"><svg viewBox="0 0 20 20"><path d="M3 5h6v10H3zM12 5h6v10h-6z" fill="url(#gPage)" stroke="#6f98d0"/></svg></button>
        </div>
      </div>
      <footer class="ff-status"><span>Zastavené</span><svg class="size-grip"><use href="#grip"/></svg></footer>
    </section>
  </main>
</body>
</html>
```
FILE: styles.css
```css
/* Global settings */
* { box-sizing: border-box; }
body {
  margin: 0;
  font-family: "DejaVu Sans Condensed", "DejaVu Sans", sans-serif;
  font-size: 10px;
  color: #111;
  overflow: hidden;
}
button, input, select {
  font: inherit;
  color: inherit;
  margin: 0;
  padding: 0;
  border: 0;
  background: none;
  border-radius: 0;
}
button { display: flex; align-items: center; justify-content: center; white-space: nowrap; }
svg { display: block; flex: none; }
.defs { position: absolute; width: 0; height: 0; }
.grow { flex: 1; }
.s8 { width: 8px; height: 8px; }
.s10 { width: 10px; height: 10px; }
.s14 { width: 16px; height: 16px; }

/* Desktop and the browser behind everything */
.desktop { position: relative; height: 100vh; overflow: hidden; background: #dfe6f5; }
.backdrop { display: flex; flex-direction: column; height: 100%; background: #fff; }
.back-bar { height: 18px; background: linear-gradient(#92959f, #a9abb4); border-bottom: 1px solid #fff; }
.back-strip { height: 9px; background: #b7b8c0; border-bottom: 1px solid #77787e; }
.back-white { height: 19px; }
.back-strip.light { height: 20px; background: linear-gradient(#dfe0e8 8px, #77787e 8px 9px, #e6e7ec 9px, #c4c6cf); border: 0; }
.back-page {
  flex: 1;
  align-self: flex-end;
  width: 43px;
  border-left: 1px solid #cfd0d4;
  background:
    linear-gradient(90deg, #fff 9px, transparent 9px),
    repeating-linear-gradient(45deg, #fff 0 2px, #d2d2d2 2px 3px);
}

/* Window chrome */
.window {
  position: absolute;
  display: flex;
  flex-direction: column;
  border: solid #7684d6;
  border-width: 0 4px 4px;
  border-radius: 7px 7px 0 0;
  background: #ece9d8;
}
.titlebar {
  display: flex;
  align-items: center;
  gap: 4px;
  height: 28px;
  margin: 0 -4px;
  padding: 2px 5px 0 6px;
  border-radius: 7px 7px 0 0;
  background: linear-gradient(#7188d8, #9db8f2 2px, #7b97e0 6px, #7a96df 14px, #84a9ec 24px, #6c81d8);
}
.title {
  flex: 1;
  font: 600 12px "Open Sans", "Noto Sans", sans-serif;
  color: #d8e4f8;
  white-space: nowrap;
}
.app-icon { width: 16px; height: 16px; }
.controls { display: flex; gap: 2px; }
.controls button {
  width: 20px;
  height: 20px;
  border: 1px solid #cdd9f7;
  border-radius: 3px;
  background: linear-gradient(135deg, #6d8cf0, #3c62dc);
}
.controls .close { background: linear-gradient(135deg, #c87c8c, #a85468); }
.controls svg { width: 20px; height: 20px; }
.btn {
  height: 18px;
  border: 1px solid #1f4a80;
  border-radius: 3px;
  background: linear-gradient(#fff, #f4f3ee 80%, #dcd8cc);
}
.size-grip { width: 12px; height: 12px; }

/* Impulse response window */
.main-win { inset: 0 51px 0 1px; border-bottom-width: 3px; }
.main-win .controls { margin-top: 2px; }
.main-win .titlebar { padding-right: 6px; }
.main-menu { height: 21px; border-bottom: 1px solid #fff; box-shadow: inset 0 -1px #aca899; }
.main-tools {
  display: flex;
  gap: 7px;
  height: 23px;
  padding: 2px 0 0 486px;
  background: linear-gradient(90deg, #ece9d8, #f2eddc);
}
.main-tools svg { width: 22px; height: 16px; }
.main-tools text { font: bold 6px "DejaVu Sans Condensed", sans-serif; fill: #7d1f24; }
.main-tools button { height: 16px; }
.sep { width: 1px; height: 16px; background: #b4b1a2; }
.second { height: 28px; padding: 4px 0 0 470px; border-bottom: 1px solid #aca899; background: none; }
.second .btn { width: 23px; padding-left: 12px; }
.main-body { display: flex; flex: 1; align-items: flex-start; min-height: 0; border-left: 1px solid #8e8c80; border-bottom: 1px solid #fff; }
.impulse { flex: 1; min-width: 0; height: auto; }
.impulse text { font: 14px "Liberation Sans", Arial, sans-serif; fill: #111; }
.main-side { align-self: stretch; width: 63px; border-left: 2px solid #fbfaf4; border-bottom: 1px solid #aca899; }
.grid-line { stroke: #17703a; fill: none; }
.green { stroke: #35d83f; fill: none; }
.red { stroke: #b5321f; fill: none; }
.impulse .axis-y text, .fr-chart .axis-y text { text-anchor: end; }
.impulse .axis-x text, .fr-chart .axis-x text { text-anchor: middle; }
.main-status { display: flex; align-items: center; height: 16px; border-top: 1px solid #8e8c80; }
.main-status .cell { width: 72px; border-right: 1px solid #d4d0c0; }
.main-status .wide { width: 151px; padding-left: 7px; }
.main-status .cell:nth-child(2) { width: 65px; }
.main-status .cell:nth-child(3) { padding-left: 7px; }
.main-status .size-grip { margin-left: 8px; }

/* Frequency response window */
.fr-win { top: 66px; left: 499px; right: 0; }
.fr-win .controls { margin-top: 2px; }
.fr-menu {
  display: flex;
  gap: 12px;
  height: 19px;
  padding-left: 5px;
  border-bottom: 1px solid #fff;
  color: #a3a08f;
}
.fr-body { display: flex; padding: 5px 0 7px 5px; }
.fr-left { flex: 1; min-width: 0; }
.fr-chart {
  width: 100%;
  border: 1px solid #fff;
  border-top: 2px solid #7b796c;
  border-left: 2px solid #7b796c;
}
.fr-chart text { font: 10px "Liberation Sans", Arial, sans-serif; fill: #111; }
.fr-chart .head, .fr-chart .head text { font-size: 12px; }
.fr-chart .minor { stroke: #0d4a24; }
.fr-chart .major { stroke: #12693a; }
.fr-buttons { display: flex; gap: 5px; padding: 7px 1px 0 3px; }
.fr-buttons .btn { width: 33px; }
.fr-buttons .long { width: 50px; }
.btn.lit { box-shadow: inset 0 0 0 2px #b5cbf4; }
.btn.pressed { background: #dcdcd4; }
.fr-side { display: flex; flex-direction: column; width: 70px; padding: 5px 0 0 13px; }
.pair { display: flex; gap: 5px; margin-bottom: 15px; }
.stack { display: flex; flex-direction: column; justify-content: space-between; }
.stack .btn { width: 28px; }
.spin { width: 16px; height: 32px; background: #c6d5fb; border: 1px solid #e6edfd; }
.spin button { width: 14px; height: 15px; }
.spin svg, .hspin svg { width: 12px; height: 12px; }
.fr-side label { margin: -3px 0 5px -1px; }
.combo { display: flex; width: 49px; height: 20px; border: 1px solid #7f9db9; background: #fff; }
.combo select { flex: 1; min-width: 0; padding-left: 4px; appearance: none; }
.combo svg { width: 16px; height: 16px; margin: 1px; background: #c3d3fb; }
.hf { margin: 76px 0 7px 4px; }
.hf.low { margin: 3px 0 5px 5px; }
.hspin { display: flex; width: 49px; height: 16px; border: 1px solid #fff; background: #c6d5fb; }
.hspin button { flex: 1; }
.corner { position: absolute; right: 0; bottom: 0; width: 12px; height: 12px; }

/* Firefox window */
.ff-win { top: 6px; left: 1px; width: 488px; border-color: #0a3ed4; border-width: 0 5px 5px 4px; }
.ff-win .titlebar {
  height: 29px;
  margin: 0 -5px 0 -4px;
  gap: 3px;
  background: linear-gradient(#0a45c8, #3d8cff 2px, #0b5ff0 6px, #0556e8 15px, #0766fa 24px, #0442c4);
}
.ff-win .title { font-size: 13px; font-weight: 600; color: #fff; }
.ff-win .controls button { border-color: #fff; background: linear-gradient(135deg, #6f9af8, #2356dd); }
.ff-win .controls .close { background: linear-gradient(135deg, #ee8a66, #d03a18); }
.ff-menu {
  display: flex;
  align-items: center;
  gap: 12px;
  height: 22px;
  padding-left: 4px;
  background: linear-gradient(#b9bac2, #8e909a);
}
.throbber { width: 18px; height: 18px; margin-left: auto; margin-right: 2px; }
.ff-nav {
  display: flex;
  align-items: center;
  gap: 10px;
  height: 36px;
  padding-left: 5px;
  background: linear-gradient(#a4a6af, #d9dae0);
}
.ff-nav button svg { width: 30px; height: 30px; }
.nav-pair { display: flex; gap: 6px; margin-right: 9px; }
.url, .search { display: flex; align-items: center; height: 20px; border-radius: 10px; background: #fff; }
.url { width: 97px; background: linear-gradient(#f2f2f4, #bfc0c6); border: 1px solid #aaabb3; }
.site { width: 31px; height: 18px; }
.url-in { display: flex; align-items: center; gap: 2px; flex: 1; height: 18px; padding-left: 8px; border-radius: 9px; background: #fff; }
.url-in input { width: 20px; }
.search { width: 74px; margin-left: 3px; padding-left: 5px; gap: 2px; }
.search input { width: 18px; }
.search .g { width: 16px; height: 16px; }
.search .mag { width: 20px; height: 16px; }
.nav-undo { width: 36px; height: 30px; margin-left: -4px; }
.ff-tabs { display: flex; gap: 3px; height: 19px; background: #c3c4cb; border-top: 1px solid #8e8f96; }
.tab-nav { width: 24px; }
.tab-nav svg { width: 22px; height: 18px; }
.tab {
  flex: 1;
  justify-content: flex-start;
  gap: 2px;
  min-width: 0;
  padding-left: 2px;
  border: 1px solid #8f9098;
  border-bottom: 0;
  background: linear-gradient(#d6d7dc, #bcbdc5);
  color: #55565c;
}
.tab svg { width: 16px; height: 16px; }
.tab svg.x { width: 14px; height: 14px; margin-left: auto; }
.tab.active { background: linear-gradient(#8fb9ef, #b5d6fb); color: #000; font-weight: bold; }
.tab-end { width: 12px; margin-right: 2px; }

/* Acrobat toolbars */
.pdf-tools { display: flex; height: 32px; background: #ece9d8; }
.pdf-tools:nth-of-type(4) { height: 33px; border-bottom: 1px solid #8e8c80; }
.group { display: flex; align-items: center; border: solid #b6b3a4; border-width: 1px 0 1px 1px; }
.group.last { border-right-width: 1px; }
.group::before {
  content: "";
  width: 3px;
  height: 20px;
  margin: 0 3px 0 2px;
  background: repeating-linear-gradient(#aaa799 0 1px, transparent 1px 3px);
}
.group button { width: 31px; height: 28px; }
.group button svg { width: 20px; height: 20px; }
.group .sel, .pdf-nav .sel { background: #faf9f5; border: 1px solid #d2cfc0; }
.group .tight { width: 30px; }
.zoom, .page { height: 20px; border: 1px solid #7f9db9; background: #fff; }
.zoom { width: 47px; padding-left: 5px; }
.abc { font: bold 7px "Liberation Serif", serif; fill: #25457a; }
.group .yahoo { width: 40px; }
.yahoo b { font: bold 14px "Liberation Serif", serif; color: #d3101c; }
.group .yahoo svg { width: 14px; height: 16px; }

/* Document pane */
.pdf-view { display: flex; }
.side-tabs { display: flex; flex-direction: column; width: 19px; padding: 1px 0 0 2px; background: #c9c6b8; border-right: 1px solid #77756a; }
.side-tabs button {
  writing-mode: vertical-rl;
  transform: rotate(180deg);
  width: 16px;
  height: 49px;
  border: 1px solid #77756a;
  border-left: 0;
  border-radius: 0 0 8px 0;
  background: #ece9d8;
}
.side-tabs button.on { height: 67px; font-weight: bold; background: #f3f1e6; }
.side-tabs button.tall { height: 73px; }
.splitter { width: 7px; background: #ece9d8; border-right: 1px solid #8e8c80; }
.doc { display: flex; flex: 1; min-width: 0; background: #fff; }
.doc-main { flex: 1; min-width: 0; }
.doc-page { width: 100%; }
.doc-page .caption { font: 8px "Noto Sans", sans-serif; }
.doc-page .tick { font: bold 9px "DejaVu Sans Mono", monospace; }
.doc-page .part { font: 8px "DejaVu Sans Mono", monospace; }
.doc-page polyline { fill: none; stroke: #333; }
.frame { fill: none; stroke: #222; }
.dots { fill: none; stroke: #777; stroke-dasharray: 1 2; }
.dots.v { stroke-dasharray: 1 4; stroke: #444; }
.hbar { display: flex; height: 17px; align-items: center; background: #f6f5ef; }
.expand { width: 16px; height: 17px; background: #ece9d8; border-right: 1px solid #b6b3a4; }
.expand svg, .flat svg, .sb svg { width: 14px; height: 14px; }
.size { width: 104px; height: 17px; line-height: 17px; text-align: center; background: #ece9d8; }
.sb { width: 15px; height: 15px; border: 1px solid #e8eefc; border-radius: 2px; background: #c3d3fb; }
.track { flex: 1; display: flex; }
.thumb { background: linear-gradient(#cbdafe, #b6cbf9); border: 1px solid #9db6ec; border-radius: 2px; }
.hbar .track { height: 15px; padding: 0 73px 0 16px; }
.hbar .thumb { flex: 1; background: repeating-linear-gradient(90deg, #eef4fe 0 1px, #8aa8e4 1px 2px) center / 8px 6px no-repeat, #bfd0fa; }
.vbar { display: flex; flex-direction: column; align-items: center; width: 15px; background: #f6f5ef; }
.flat { width: 15px; height: 16px; background: #ece9d8; border-bottom: 1px solid #b6b3a4; }
.vbar .track { align-items: center; padding-top: 20px; }
.vbar .thumb { width: 14px; height: 16px; background: repeating-linear-gradient(#eef4fe 0 1px, #8aa8e4 1px 2px) center / 7px 8px no-repeat, #c3d3fb; }
.nook { width: 15px; height: 16px; background: #ece9d8; }
.pdf-nav { display: flex; height: 26px; border-top: 1px solid #8e8c80; background: #ece9d8; }
.pdf-nav .cell { display: flex; flex: none; align-items: center; border-right: 1px solid #b6b3a4; padding: 0 4px; }
.pdf-nav .cell:last-child { border: 0; padding-right: 0; }
.pdf-nav button { width: 31px; height: 22px; }
.pdf-nav .end { width: 26px; }
.pdf-nav svg { width: 20px; height: 20px; }
.pdf-nav .hide { width: 86px; padding: 0 2px; }
.page { width: 66px; text-align: center; }
.ff-status {
  display: flex;
  align-items: center;
  justify-content: space-between;
  height: 19px;
  padding-left: 6px;
  background: linear-gradient(#e4e4ea, #b6b8c4 7px, #eeeef2);
}
```
